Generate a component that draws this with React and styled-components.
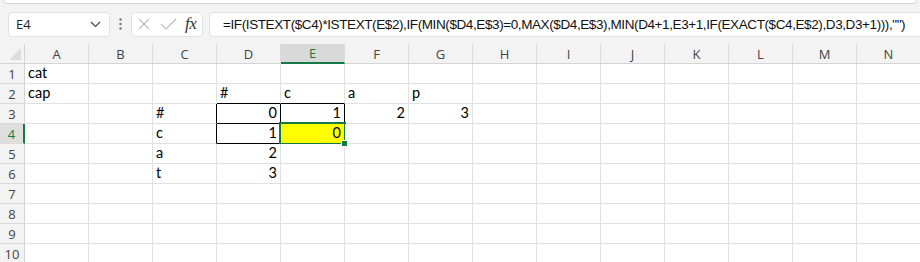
import styled, { createGlobalStyle } from 'styled-components';

const GlobalStyle = createGlobalStyle`
  body {
    margin: 0;
    background: #ffffff;
    overflow: hidden;
  }
`;

const Page = styled.div`
  width: 920px;
  height: 262px;
  overflow: hidden;
  background: #f3f3f3;
`;

const RibbonEdge = styled.div`
  height: 3px;
  margin: 0 3px;
  background: #ffffff;
  border: 1px solid #d6d6d6;
  border-top: none;
  border-radius: 0 0 6px 6px;
`;

const FormulaBar = styled.div`
  display: flex;
  align-items: center;
  height: 40px;
  padding: 0 0 0 8px;
  font-family: "Open Sans", "Liberation Sans", sans-serif;
`;

const NameBox = styled.div`
  box-sizing: border-box;
  flex: none;
  width: 102px;
  height: 25px;
  display: flex;
  align-items: center;
  justify-content: space-between;
  padding: 0 8px 0 7px;
  background: #ffffff;
  border: 1px solid #e1e1e1;
  border-radius: 4px;
  font-size: 13px;
  color: #222;
`;

const Dots = styled.div`
  flex: none;
  width: 21px;
  display: flex;
  justify-content: center;
`;

const ActionBox = styled.div`
  box-sizing: border-box;
  flex: none;
  width: 72px;
  height: 25px;
  display: flex;
  align-items: center;
  gap: 6px;
  padding: 0 5px 0 6px;
  background: #ffffff;
  border: 1px solid #e1e1e1;
  border-radius: 4px;
`;

const Fx = styled.span`
  margin-left: 2px;
  font-family: "Liberation Serif", "DejaVu Serif", serif;
  font-style: italic;
  font-size: 17px;
  color: #333;
  letter-spacing: -0.5px;
`;

const FormulaBox = styled.div`
  box-sizing: border-box;
  flex: 1;
  min-width: 0;
  height: 25px;
  margin-left: 6px;
  margin-right: -10px;
  display: flex;
  align-items: center;
  padding-left: 13px;
  background: #ffffff;
  border: 1px solid #e1e1e1;
  border-radius: 4px;
  font-family: "Liberation Sans", Arial, sans-serif;
  font-size: 13.5px;
  letter-spacing: -0.4px;
  color: #111;
  white-space: nowrap;
  overflow: hidden;
`;

const Sheet = styled.div`
  display: grid;
  grid-template-columns: 25px repeat(14, 64px);
  grid-auto-rows: 20px;
  background: #ffffff;
`;

const Corner = styled.div`
  position: relative;
  background: #f3f3f3;
  border-right: 1px solid #d4d4d4;
  border-bottom: 1px solid #d4d4d4;
  &::after {
    content: "";
    position: absolute;
    right: 3px;
    bottom: 3px;
    border-left: 12px solid transparent;
    border-bottom: 12px solid #dcdcdc;
  }
`;

const ColHead = styled.div`
  display: flex;
  align-items: center;
  justify-content: center;
  background: ${p => (p.$active ? '#d9d9d9' : '#f3f3f3')};
  border-right: 1px solid #dadada;
  border-bottom: ${p => (p.$active ? '2px solid #137b43' : '1px solid #d4d4d4')};
  font-family: "Open Sans", "Liberation Sans", sans-serif;
  font-size: 13px;
  color: ${p => (p.$active ? '#137b43' : '#444')};
`;

const RowHead = styled.div`
  display: flex;
  align-items: center;
  justify-content: center;
  padding-top: 1px;
  background: ${p => (p.$active ? '#dedede' : '#f3f3f3')};
  border-bottom: 1px solid #dadada;
  border-right: ${p => (p.$active ? '2px solid #137b43' : '1px solid #d4d4d4')};
  font-family: "Open Sans", "Liberation Sans", sans-serif;
  font-size: 13px;
  color: ${p => (p.$active ? '#137b43' : '#444')};
`;

const Cell = styled.div`
  position: relative;
  display: flex;
  align-items: flex-end;
  justify-content: ${p => (p.$num ? 'flex-end' : 'flex-start')};
  padding: 0 3px 1px 3px;
  background: ${p => p.$fill || '#ffffff'};
  border-right: 1px solid ${p => (p.$br ? '#000000' : '#e1e1e1')};
  border-bottom: 1px solid ${p => (p.$bb ? '#000000' : '#e1e1e1')};
  font-family: "Lato", "Liberation Sans", sans-serif;
  font-size: 14.5px;
  line-height: 18px;
  color: #000;
  white-space: nowrap;

  ${p => p.$sel && `
    &::after {
      content: "";
      position: absolute;
      left: -2px;
      top: -2px;
      right: -2px;
      bottom: -2px;
      border: 2px solid #137b43;
      pointer-events: none;
    }
    &::before {
      content: "";
      position: absolute;
      right: -4px;
      bottom: -4px;
      width: 5px;
      height: 5px;
      background: #137b43;
      border: 1px solid #ffffff;
      z-index: 2;
    }
  `}
`;

const columns = ['A', 'B', 'C', 'D', 'E', 'F', 'G', 'H', 'I', 'J', 'K', 'L', 'M', 'N'];

// cell content keyed by address; borders for the outlined block D3:E4
const cells = {
  A1: { v: 'cat' },
  A2: { v: 'cap' },
  D2: { v: '#', bb: true },
  E2: { v: 'c', bb: true },
  F2: { v: 'a' },
  G2: { v: 'p' },
  C3: { v: '#', br: true },
  D3: { v: 0, br: true, bb: true },
  E3: { v: 1, br: true, bb: true },
  F3: { v: 2 },
  G3: { v: 3 },
  C4: { v: 'c', br: true },
  D4: { v: 1, br: true, bb: true },
  E4: { v: 0, fill: '#ffff00', sel: true },
  C5: { v: 'a' },
  D5: { v: 2 },
  C6: { v: 't' },
  D6: { v: 3 },
};

const formula =
  '=IF(ISTEXT($C4)*ISTEXT(E$2),IF(MIN($D4,E$3)=0,MAX($D4,E$3),MIN(D4+1,E3+1,IF(EXACT($C4,E$2),D3,D3+1))),"")';

const Chevron = () => (
  <svg width="11" height="7" viewBox="0 0 11 7" fill="none">
    <path d="M1 1l4.5 4.5L10 1" stroke="#444" strokeWidth="1.2" />
  </svg>
);

const App = () => {
  const rows = Array.from({ length: 10 }, (_, i) => i + 1);
  return (
    <Page>
      <GlobalStyle />
      <RibbonEdge />
      <FormulaBar>
        <NameBox>
          <span>E4</span>
          <Chevron />
        </NameBox>
        <Dots>
          <svg width="3" height="12" viewBox="0 0 3 12">
            <circle cx="1.5" cy="1.5" r="1.2" fill="#777" />
            <circle cx="1.5" cy="6" r="1.2" fill="#777" />
            <circle cx="1.5" cy="10.5" r="1.2" fill="#777" />
          </svg>
        </Dots>
        <ActionBox>
          <svg width="12" height="12" viewBox="0 0 12 12">
            <path d="M1 1l10 10M11 1L1 11" stroke="#bdbdbd" strokeWidth="1.2" />
          </svg>
          <svg width="17" height="12" viewBox="0 0 17 12" style={{ marginLeft: 4 }}>
            <path d="M1 6l5 5L16 1" stroke="#bdbdbd" strokeWidth="1.2" fill="none" />
          </svg>
          <Fx>fx</Fx>
        </ActionBox>
        <FormulaBox>{formula}</FormulaBox>
      </FormulaBar>
      <Sheet>
        <Corner />
        {columns.map(c => (
          <ColHead key={c} $active={c === 'E'}>{c}</ColHead>
        ))}
        {rows.map(r => [
          <RowHead key={'h' + r} $active={r === 4}>{r}</RowHead>,
          ...columns.map(c => {
            const d = cells[c + r] || {};
            return (
              <Cell
                key={c + r}
                $num={typeof d.v === 'number'}
                $fill={d.fill}
                $br={d.br}
                $bb={d.bb}
                $sel={d.sel}
              >
                {d.v}
              </Cell>
            );
          }),
        ])}
      </Sheet>
    </Page>
  );
};

export default App;
